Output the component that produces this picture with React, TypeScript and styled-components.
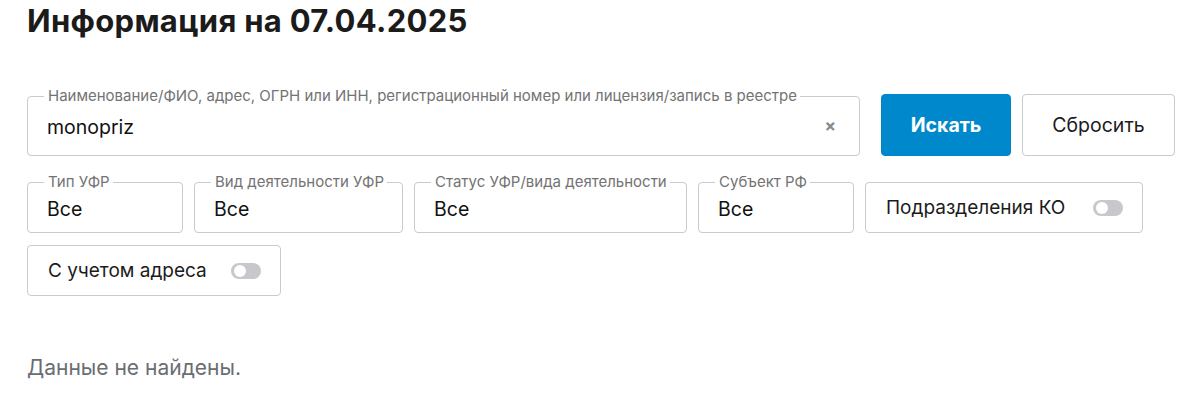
import styled, { createGlobalStyle } from "styled-components"

const GlobalStyle = createGlobalStyle`
  body {
    margin: 0;
    background: #fff;
    font-family: Inter, "Noto Sans", sans-serif;
    color: #1a1a1a;
  }
`

const Page = styled.div`
  padding: 1px 27px 0 27px;
  width: 1148px;
`

const Title = styled.h1`
  margin: 0;
  font-size: 31px;
  line-height: 40px;
  font-weight: 700;
  color: #1b1b1b;
  letter-spacing: 0.3px;
`

const SearchRow = styled.div`
  display: flex;
  align-items: flex-end;
  gap: 11px;
  margin-top: 53px;
`

const Field = styled.div<{ $w: number; $h: number }>`
  position: relative;
  box-sizing: border-box;
  width: ${(p) => p.$w}px;
  height: ${(p) => p.$h}px;
  border: 1px solid #c9cacc;
  border-radius: 4px;
  display: flex;
  align-items: center;
  padding: 0 19px;
  flex-shrink: 0;
`

const Legend = styled.span`
  position: absolute;
  top: -10px;
  left: 16px;
  padding: 0 3px 0 4px;
  background: #fff;
  font-size: 15px;
  line-height: 18px;
  color: #737373;
  white-space: nowrap;
`

const Value = styled.span`
  font-size: 19.5px;
  color: #111;
  flex: 1;
  padding-top: 2px;
`

const Clear = styled.span`
  font-size: 17px;
  color: #8a8a8a;
  font-weight: 700;
  margin-right: 4px;
`

const Button = styled.button<{ $primary?: boolean; $w: number }>`
  box-sizing: border-box;
  width: ${(p) => p.$w}px;
  height: 62px;
  border-radius: 4px;
  font-family: inherit;
  font-size: 19.5px;
  cursor: pointer;
  border: 1px solid ${(p) => (p.$primary ? "#0088cc" : "#c9cacc")};
  background: ${(p) => (p.$primary ? "#0088cc" : "#fff")};
  color: ${(p) => (p.$primary ? "#fff" : "#1b1b1b")};
  font-weight: ${(p) => (p.$primary ? 700 : 400)};
  margin-left: ${(p) => (p.$primary ? "10px" : "0")};
  flex-shrink: 0;
`

const FilterRow = styled.div`
  display: flex;
  flex-wrap: wrap;
  gap: 12px 11px;
  margin-top: 26px;
`

const ToggleBox = styled.label<{ $w: number }>`
  box-sizing: border-box;
  width: ${(p) => p.$w}px;
  height: 51px;
  border: 1px solid #c9cacc;
  border-radius: 4px;
  display: flex;
  align-items: center;
  justify-content: space-between;
  padding: 0 19px 0 20px;
  font-size: 19px;
  color: #1b1b1b;
  cursor: pointer;
`

const Switch = styled.span`
  position: relative;
  flex-shrink: 0;
  width: 30px;
  height: 16px;
  border-radius: 8px;
  background: #c6c8cb;
  &::after {
    content: "";
    position: absolute;
    left: 3px;
    top: 2px;
    width: 12px;
    height: 12px;
    border-radius: 50%;
    background: #fff;
  }
`

const Empty = styled.p`
  margin: 59px 0 0 0;
  font-size: 21px;
  color: #6a6d72;
`

const filters = [
  { label: "Тип УФР", w: 156 },
  { label: "Вид деятельности УФР", w: 209 },
  { label: "Статус УФР/вида деятельности", w: 273 },
  { label: "Субъект РФ", w: 156 },
]

export default function App() {
  return (
    <Page>
      <GlobalStyle />
      <Title>Информация на 07.04.2025</Title>
      <SearchRow>
        <Field $w={833} $h={60}>
          <Legend>
            Наименование/ФИО, адрес, ОГРН или ИНН, регистрационный номер или лицензия/запись в реестре
          </Legend>
          <Value>monopriz</Value>
          <Clear>×</Clear>
        </Field>
        <Button $primary $w={130}>Искать</Button>
        <Button $w={153}>Сбросить</Button>
      </SearchRow>
      <FilterRow>
        {filters.map((f) => (
          <Field key={f.label} $w={f.w} $h={51}>
            <Legend>{f.label}</Legend>
            <Value>Все</Value>
          </Field>
        ))}
        <ToggleBox $w={278}>
          Подразделения КО
          <Switch />
        </ToggleBox>
        <ToggleBox $w={254}>
          С учетом адреса
          <Switch />
        </ToggleBox>
      </FilterRow>
      <Empty>Данные не найдены.</Empty>
    </Page>
  )
}
